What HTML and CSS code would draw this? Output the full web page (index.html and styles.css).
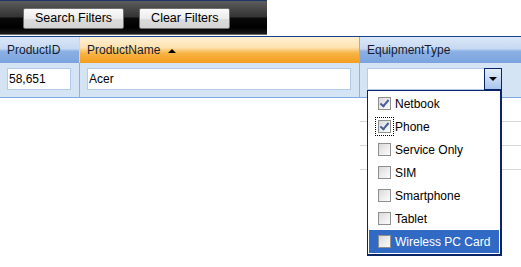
FILE: index.html
```html
<!DOCTYPE html>
<html lang="en">
<head>
    <meta charset="UTF-8">
    <title>Products - Filter Row</title>
    <link rel="stylesheet" href="styles.css">
</head>
<body>
<div class="toolbar">
    <button class="btn">Search Filters</button>
    <button class="btn">Clear Filters</button>
</div>

<div class="grid">
    <div class="head-row">
        <div class="hcell col-id">ProductID</div>
        <div class="hcell col-name sorted">ProductName <span class="sort-arrow"></span></div>
        <div class="hcell col-type">EquipmentType</div>
    </div>

    <div class="filter-row">
        <div class="fcell col-id">
            <input class="text-input input-id" type="text" value="58,651">
        </div>
        <div class="fcell col-name">
            <input class="text-input input-name" type="text" value="Acer">
        </div>
        <div class="fcell col-type">
            <div class="combo">
                <span class="combo-field"></span>
                <span class="combo-btn"><span class="combo-arrow"></span></span>
            </div>
            <ul class="dropdown">
                <li class="item"><span class="check checked"></span>Netbook</li>
                <li class="item"><span class="check checked focused"></span>Phone</li>
                <li class="item"><span class="check"></span>Service Only</li>
                <li class="item"><span class="check"></span>SIM</li>
                <li class="item"><span class="check"></span>Smartphone</li>
                <li class="item"><span class="check"></span>Tablet</li>
                <li class="item item-hover"><span class="check"></span>Wireless PC Card</li>
            </ul>
        </div>
    </div>

    <div class="body-rows">
        <div class="col-id"></div>
        <div class="col-name"></div>
        <div class="col-type">
            <div class="row"></div>
            <div class="row"></div>
            <div class="row"></div>
        </div>
    </div>
</div>
</body>
</html>
```

FILE: styles.css
```css
html {
    height: 100%;
}

body {
    margin: 0;
    min-height: 100%;
    background: #fff;
    font-family: "Liberation Sans", Arial, sans-serif;
    font-size: 12px;
    color: #000;
}

/* toolbar */
.toolbar {
    width: 267px;
    height: 35px;
    border-top: 1px solid #1c3766;
    border-bottom: 1px solid #6b6b6b;
    margin-bottom: 1px;
    background: linear-gradient(to bottom, #5c5c5c 0%, #333 48%, #0a0a0a 52%, #000 80%, #1a1a1a 100%);
    display: flex;
    align-items: center;
    gap: 15px;
    padding-left: 23px;
    box-sizing: border-box;
}

.btn {
    height: 21px;
    padding: 0 11px;
    margin-top: 1px;
    border: 1px solid #707070;
    border-radius: 2px;
    background: linear-gradient(to bottom, #fafafa 0%, #ececec 50%, #dcdcdc 51%, #d4d4d4 100%);
    font-family: "Liberation Sans", Arial, sans-serif;
    font-size: 12.5px;
    color: #000;
    line-height: 19px;
}

/* grid */
.grid {
    border-top: 1px solid #15428b;
    min-height: 230px;
}

.col-id {
    width: 80px;
    box-sizing: border-box;
    border-right: 1px solid #a9c4e8;
    flex: none;
}

.col-name {
    width: 280px;
    box-sizing: border-box;
    border-right: 1px solid #a9c4e8;
    flex: none;
}

.col-type {
    flex: 1;
    position: relative;
}

.head-row {
    display: flex;
    height: 26px;
}

.hcell {
    line-height: 26px;
    padding-left: 7px;
    color: #141c2e;
    background: linear-gradient(to bottom, #dbe7f7 0%, #c6d9f2 45%, #8bb0e4 55%, #7aa3df 100%);
}

.hcell.col-id {
    border-right-color: #c5d8f1;
}

.hcell.col-name {
    border-right-color: #9fbde6;
}

.hcell.sorted {
    background: linear-gradient(to bottom, #fff0d4 0%, #fde2b0 40%, #f8b446 62%, #f39d1c 100%);
    border-right-color: #e7a34a;
}

.sort-arrow {
    display: inline-block;
    width: 0;
    height: 0;
    border-style: solid;
    border-width: 0 4px 4px 4px;
    border-color: transparent transparent #000 transparent;
    margin-left: 4px;
    vertical-align: 1px;
}

.filter-row {
    display: flex;
    height: 35px;
    background: #d5e4f5;
    border-bottom: 1px solid #7fa6dd;
    box-sizing: border-box;
}

.fcell {
    padding: 5px 0 0 7px;
    box-sizing: border-box;
}

.fcell.col-id,
.fcell.col-name {
    border-right-color: #8fb2e2;
}

.text-input {
    height: 22px;
    box-sizing: border-box;
    border: 1px solid #b4cbe9;
    padding: 0 0 0 1px;
    margin: 0;
    font-family: "Liberation Sans", Arial, sans-serif;
    font-size: 12px;
    color: #000;
    background: #fff;
    outline: none;
}

.input-id {
    width: 64px;
}

.input-name {
    width: 264px;
}

/* equipment combo */
.combo {
    display: flex;
    width: 135px;
    height: 22px;
    box-sizing: border-box;
}

.combo-field {
    flex: 1;
    background: #fff;
    border: 1px solid #b4cbe9;
    border-right: none;
}

.combo-btn {
    width: 18px;
    box-sizing: border-box;
    border: 1px solid #0a246a;
    background: linear-gradient(to bottom, #e3edfb 0%, #c7daf4 50%, #a9c4ec 100%);
    display: flex;
    align-items: center;
    justify-content: center;
}

.combo-arrow {
    width: 0;
    height: 0;
    border-style: solid;
    border-width: 4px 4px 0 4px;
    border-color: #000 transparent transparent transparent;
}

.dropdown {
    position: absolute;
    left: 7px;
    top: 27px;
    width: 135px;
    margin: 0;
    padding: 1px;
    list-style: none;
    box-sizing: border-box;
    background: #fff;
    border: 1px solid #0a246a;
    border-right-width: 2px;
    border-bottom-width: 2px;
    z-index: 2;
}

.item {
    height: 23px;
    display: flex;
    align-items: center;
    padding-left: 9px;
    font-size: 12px;
    color: #000;
}

.item-hover {
    background: #316ac5;
    color: #fff;
}

.check {
    width: 13px;
    height: 13px;
    box-sizing: border-box;
    border: 1px solid #8e8f8f;
    background: linear-gradient(135deg, #d8d8d8 0%, #ececec 50%, #fbfbfb 100%);
    margin-right: 4px;
    position: relative;
    flex: none;
}

.check.checked::after {
    content: "";
    position: absolute;
    left: 3px;
    top: 0px;
    width: 3px;
    height: 7px;
    border: solid #4b5f97;
    border-width: 0 2px 2px 0;
    transform: rotate(40deg);
}

.check.focused {
    outline: 1px dotted #000;
    outline-offset: 2px;
}

/* empty rows */
.body-rows {
    display: flex;
}

.body-rows .col-id,
.body-rows .col-name {
    border-right: none;
}

.row {
    height: 24px;
    box-sizing: border-box;
    border-bottom: 1px solid #d6d6d6;
}
```
